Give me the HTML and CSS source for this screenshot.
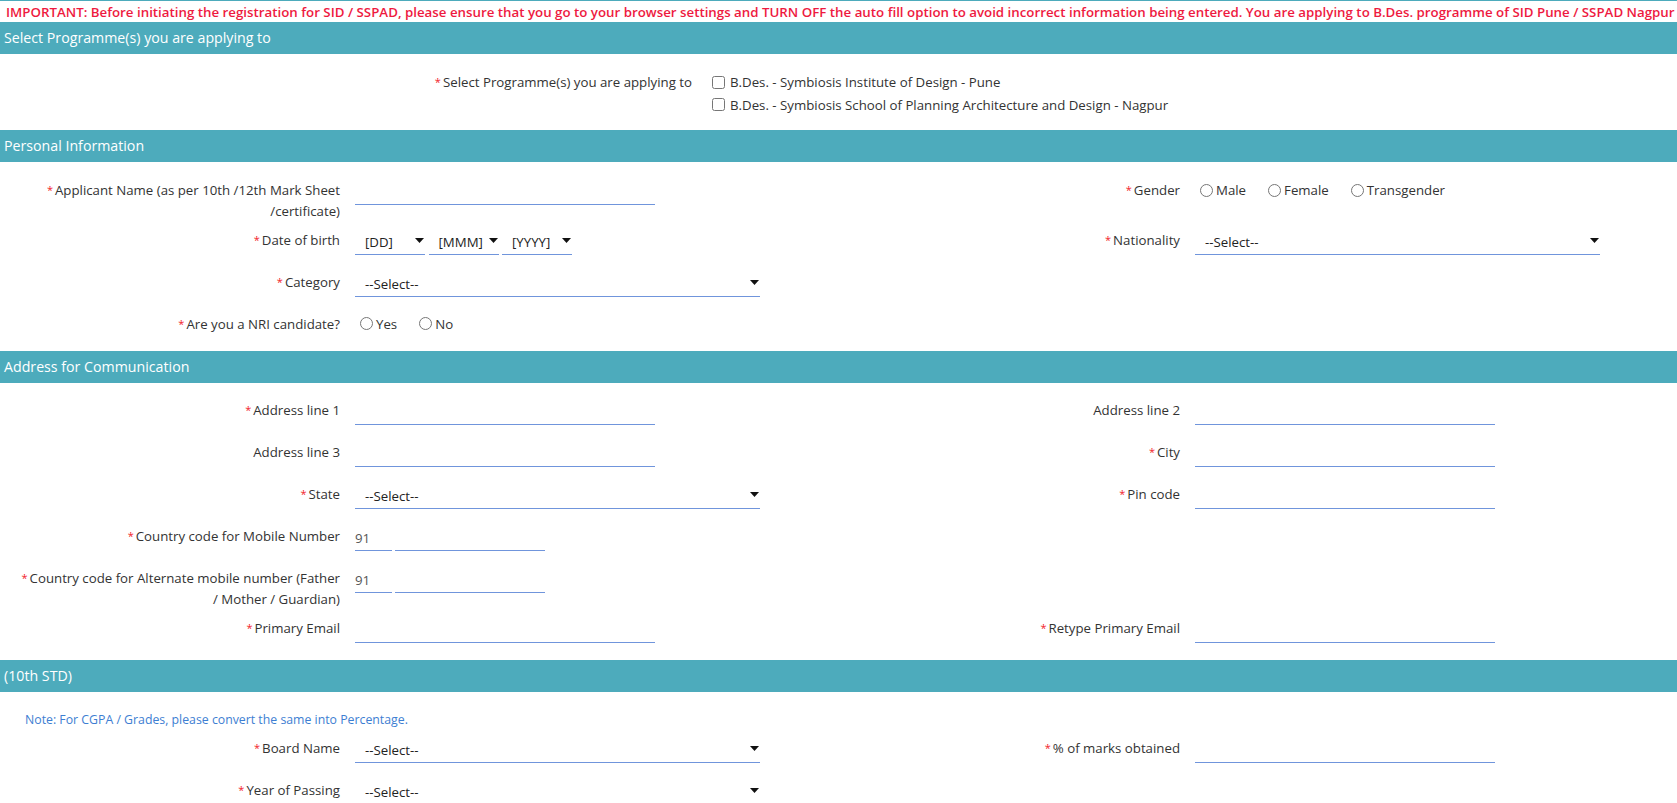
FILE: index.html
```html
<!DOCTYPE html>
<html lang="en">
<head>
<meta charset="utf-8">
<title>Registration</title>
<link rel="stylesheet" href="styles.css">
</head>
<body>
<div class="notice">IMPORTANT: Before initiating the registration for SID / SSPAD, please ensure that you go to your browser settings and TURN OFF the auto fill option to avoid incorrect information being entered. You are applying to B.Des. programme of SID Pune / SSPAD Nagpur</div>

<section class="sec">
  <h2 class="sec-title">Select Programme(s) you are applying to</h2>
  <div class="sec-body prog-body">
    <div class="prog-row">
      <div class="lbl prog-lbl"><span class="req">*</span>Select Programme(s) you are applying to</div>
      <div class="checks">
        <label class="chk"><input type="checkbox">B.Des. - Symbiosis Institute of Design - Pune</label>
        <label class="chk"><input type="checkbox">B.Des. - Symbiosis School of Planning Architecture and Design - Nagpur</label>
      </div>
    </div>
  </div>
</section>

<section class="sec">
  <h2 class="sec-title">Personal Information</h2>
  <div class="sec-body pers-body">
    <div class="grid">
      <div class="field">
        <div class="lbl two"><span class="req">*</span>Applicant Name (as per 10th /12th Mark Sheet<br>/certificate)</div>
        <div class="ctl"><input class="txt" type="text"></div>
      </div>
      <div class="field">
        <div class="lbl"><span class="req">*</span>Gender</div>
        <div class="radios">
          <label class="rad"><input type="radio" name="g">Male</label>
          <label class="rad"><input type="radio" name="g">Female</label>
          <label class="rad"><input type="radio" name="g">Transgender</label>
        </div>
      </div>
      <div class="field">
        <div class="lbl"><span class="req">*</span>Date of birth</div>
        <div class="ctl dob">
          <div class="sel sel-sm"><span>[DD]</span><svg class="arr" viewBox="0 0 9 5" width="9" height="5"><path d="M0 0H9L4.5 5Z"/></svg></div>
          <div class="sel sel-sm"><span>[MMM]</span><svg class="arr" viewBox="0 0 9 5" width="9" height="5"><path d="M0 0H9L4.5 5Z"/></svg></div>
          <div class="sel sel-sm"><span>[YYYY]</span><svg class="arr" viewBox="0 0 9 5" width="9" height="5"><path d="M0 0H9L4.5 5Z"/></svg></div>
        </div>
      </div>
      <div class="field">
        <div class="lbl"><span class="req">*</span>Nationality</div>
        <div class="ctl"><div class="sel sel-lg"><span>--Select--</span><svg class="arr" viewBox="0 0 9 5" width="9" height="5"><path d="M0 0H9L4.5 5Z"/></svg></div></div>
      </div>
      <div class="field">
        <div class="lbl"><span class="req">*</span>Category</div>
        <div class="ctl"><div class="sel sel-lg"><span>--Select--</span><svg class="arr" viewBox="0 0 9 5" width="9" height="5"><path d="M0 0H9L4.5 5Z"/></svg></div></div>
      </div>
      <div></div>
      <div class="field">
        <div class="lbl"><span class="req">*</span>Are you a NRI candidate?</div>
        <div class="radios">
          <label class="rad"><input type="radio" name="nri">Yes</label>
          <label class="rad"><input type="radio" name="nri">No</label>
        </div>
      </div>
      <div></div>
    </div>
  </div>
</section>

<section class="sec">
  <h2 class="sec-title">Address for Communication</h2>
  <div class="sec-body">
    <div class="grid">
      <div class="field">
        <div class="lbl"><span class="req">*</span>Address line 1</div>
        <div class="ctl"><input class="txt" type="text"></div>
      </div>
      <div class="field">
        <div class="lbl">Address line 2</div>
        <div class="ctl"><input class="txt" type="text"></div>
      </div>
      <div class="field">
        <div class="lbl">Address line 3</div>
        <div class="ctl"><input class="txt" type="text"></div>
      </div>
      <div class="field">
        <div class="lbl"><span class="req">*</span>City</div>
        <div class="ctl"><input class="txt" type="text"></div>
      </div>
      <div class="field">
        <div class="lbl"><span class="req">*</span>State</div>
        <div class="ctl"><div class="sel sel-lg"><span>--Select--</span><svg class="arr" viewBox="0 0 9 5" width="9" height="5"><path d="M0 0H9L4.5 5Z"/></svg></div></div>
      </div>
      <div class="field">
        <div class="lbl"><span class="req">*</span>Pin code</div>
        <div class="ctl"><input class="txt" type="text"></div>
      </div>
      <div class="field">
        <div class="lbl"><span class="req">*</span>Country code for Mobile Number</div>
        <div class="ctl phone"><input class="txt code" type="text" value="91"><input class="txt num" type="text"></div>
      </div>
      <div></div>
      <div class="field">
        <div class="lbl two"><span class="req">*</span>Country code for Alternate mobile number (Father<br>/ Mother / Guardian)</div>
        <div class="ctl phone"><input class="txt code" type="text" value="91"><input class="txt num" type="text"></div>
      </div>
      <div></div>
      <div class="field">
        <div class="lbl"><span class="req">*</span>Primary Email</div>
        <div class="ctl"><input class="txt" type="text"></div>
      </div>
      <div class="field">
        <div class="lbl"><span class="req">*</span>Retype Primary Email</div>
        <div class="ctl"><input class="txt" type="text"></div>
      </div>
    </div>
  </div>
</section>

<section class="sec">
  <h2 class="sec-title">(10th STD)</h2>
  <div class="sec-body">
    <p class="note">Note: For CGPA / Grades, please convert the same into Percentage.</p>
    <div class="grid">
      <div class="field">
        <div class="lbl"><span class="req">*</span>Board Name</div>
        <div class="ctl"><div class="sel sel-lg"><span>--Select--</span><svg class="arr" viewBox="0 0 9 5" width="9" height="5"><path d="M0 0H9L4.5 5Z"/></svg></div></div>
      </div>
      <div class="field">
        <div class="lbl"><span class="req">*</span>% of marks obtained</div>
        <div class="ctl"><input class="txt" type="text"></div>
      </div>
      <div class="field">
        <div class="lbl"><span class="req">*</span>Year of Passing</div>
        <div class="ctl"><div class="sel sel-lg"><span>--Select--</span><svg class="arr" viewBox="0 0 9 5" width="9" height="5"><path d="M0 0H9L4.5 5Z"/></svg></div></div>
      </div>
      <div></div>
    </div>
  </div>
</section>
</body>
</html>
```
FILE: styles.css
```css
* { box-sizing: border-box; }

body {
  margin: 0;
  font-family: "Open Sans", "Noto Sans", sans-serif;
  font-size: 13.25px;
  color: #333;
  background: #fff;
  border-top: 1px solid #4dabbc;
  overflow: hidden;
}

.notice {
  height: 21px;
  line-height: 23px;
  padding-left: 6px;
  color: #ee1a3f;
  font-weight: 600;
  font-size: 13.3px;
  white-space: nowrap;
  overflow: hidden;
}

.sec-title {
  margin: 0;
  height: 32px;
  line-height: 32px;
  padding-left: 4px;
  background: #4dabbc;
  color: #fff;
  font-size: 14.2px;
  font-weight: normal;
}

.sec-body {
  padding: 17px 0 8px;
}

.prog-body { padding: 17px 0 14px; }
.pers-body { padding-top: 18px; }

.prog-row {
  display: flex;
  align-items: flex-start;
}

.lbl {
  flex: none;
  width: 340px;
  text-align: right;
  line-height: 20.5px;
  padding-bottom: 0.5px;
  color: #333;
}

.lbl.two { line-height: 20.75px; padding-bottom: 0; }

.prog-lbl { width: 692px; line-height: 22px; }

.req {
  color: #f21c2a;
  font-size: 11px;
  margin-right: 2px;
  vertical-align: 1px;
}

.checks {
  margin-left: 16px;
  display: flex;
  flex-direction: column;
}

.chk {
  display: flex;
  align-items: center;
  height: 22.5px;
}

.chk input {
  margin: 0 5px 0 4px;
  width: 13px;
  height: 13px;
}

.grid {
  display: grid;
  grid-template-columns: 840px 1fr;
  row-gap: 8px;
}

.field {
  display: flex;
  align-items: flex-start;
}

.ctl {
  margin-left: 15px;
  height: 34px;
}

.txt {
  display: block;
  width: 300px;
  height: 25px;
  border: 0;
  border-bottom: 1px solid #7095dc;
  padding: 0;
  outline: none;
  font: inherit;
  color: #555;
  background: transparent;
}

.phone { display: flex; gap: 3px; }
.phone .code { width: 37px; }
.phone .num { width: 150px; }

.sel {
  height: 25px;
  border-bottom: 1px solid #7095dc;
  display: flex;
  align-items: flex-start;
  justify-content: space-between;
  padding-left: 10px;
  padding-right: 1px;
  color: #222;
}

.sel span { line-height: 24px; }

.sel .arr {
  margin-top: 8px;
  fill: #111;
}

.sel-lg { width: 405px; }
.sel-sm { width: 70px; }

.dob { display: flex; gap: 3.5px; }

.radios {
  margin-left: 15px;
  height: 29.5px;
  display: flex;
  gap: 17px;
}

.rad {
  display: flex;
  align-items: center;
  height: 20.5px;
}

.rad input {
  margin: 0 3px 0 5px;
  width: 13px;
  height: 13px;
}

.note {
  margin: 0 0 8px;
  padding-left: 25px;
  line-height: 21px;
  font-size: 12.3px;
  color: #3d7ed2;
}
```
